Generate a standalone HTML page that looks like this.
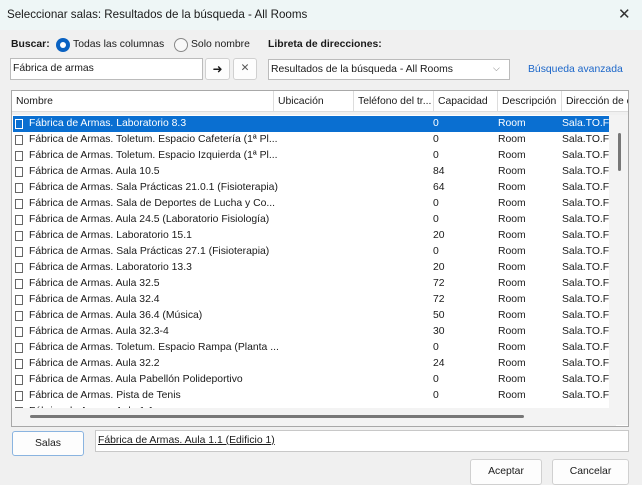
<!DOCTYPE html>
<html><head><meta charset="utf-8"><style>
*{margin:0;padding:0;box-sizing:border-box}
body{width:642px;height:480px;background:#f0f0f0;font-family:"Liberation Sans",sans-serif;font-size:10.4px;color:#1a1a1a;position:relative;overflow:hidden}
.a{position:absolute;white-space:nowrap}
.title{left:0;top:0;width:642px;height:30px;background:#eef6f6}
.box{background:#fff;border:1px solid #c8c8c8}
.row{position:absolute;left:13px;width:596px;height:16px;line-height:16px}
.row span{position:absolute}
.ic{position:absolute;left:2px;top:3px;width:8px;height:10px;border:1px solid #666;background:#fff}
.sel{background:#0a6fd1;color:#fff}
.sel .ic{border-color:#fff;background:#0a6fd1}
.btn{background:#fdfdfd;border:1px solid #d0d0d0;border-radius:3px;text-align:center}
.hd{position:absolute;top:0;height:21px;line-height:21px;border-right:1px solid #ddd;padding-left:4px}
</style></head><body>
<div class="a title"></div>
<div class="a" style="left:7px;top:8px;font-size:11.6px">Seleccionar salas: Resultados de la búsqueda - All Rooms</div>
<div class="a" style="left:618px;top:5px;font-size:15px;color:#333">✕</div>

<div class="a" style="left:11px;top:39px;font-weight:bold">Buscar:</div>
<div class="a" style="left:56px;top:38px;width:14px;height:14px;border-radius:50%;background:#0a62c2"></div>
<div class="a" style="left:60px;top:42px;width:6px;height:6px;border-radius:50%;background:#fff"></div>
<div class="a" style="left:73px;top:39px">Todas las columnas</div>
<div class="a" style="left:174px;top:38px;width:14px;height:14px;border-radius:50%;border:1px solid #888;background:#f8f8f8"></div>
<div class="a" style="left:191px;top:39px">Solo nombre</div>
<div class="a" style="left:268px;top:39px;font-weight:bold">Libreta de direcciones:</div>

<div class="a box" style="left:10px;top:58px;width:193px;height:22px;border-color:#bbb"></div>
<div class="a" style="left:13px;top:63px">Fábrica de armas</div>
<div class="a btn" style="left:205px;top:58px;width:25px;height:22px;line-height:20px;font-size:12px">➜</div>
<div class="a btn" style="left:233px;top:58px;width:24px;height:22px;line-height:20px;color:#555">✕</div>
<div class="a box" style="left:268px;top:59px;width:242px;height:21px;border-color:#bbb"></div>
<div class="a" style="left:271px;top:64px">Resultados de la búsqueda - All Rooms</div>
<div class="a" style="left:493px;top:63px;color:#777;font-size:9px">⌵</div>
<div class="a" style="left:528px;top:64px;color:#1b66c9">Búsqueda avanzada</div>

<div class="a box" style="left:11px;top:90px;width:618px;height:337px;border-color:#a8a8a8"></div>
<div class="a" style="left:12px;top:91px;width:616px;height:21px;background:#fff;border-bottom:1px solid #ddd;overflow:hidden">
<div class="hd" style="left:0;width:262px">Nombre</div>
<div class="hd" style="left:262px;width:80px">Ubicación</div>
<div class="hd" style="left:342px;width:80px">Teléfono del tr...</div>
<div class="hd" style="left:422px;width:64px">Capacidad</div>
<div class="hd" style="left:486px;width:64px">Descripción</div>
<div class="hd" style="left:550px;width:80px;border:0">Dirección de c</div>
</div>
<div class="a" style="left:12px;top:112px;width:616px;height:3px;background:#f0f0f0"></div>
<div class="a" style="left:12px;top:408px;width:604px;height:18px;background:#f3f3f3"></div>
<div class="a" style="left:30px;top:415px;width:494px;height:3px;border-radius:2px;background:#777"></div>
<div class="a" style="left:609px;top:115px;width:19px;height:310px;background:#f3f3f3"></div>
<div class="a" style="left:618px;top:133px;width:3px;height:38px;border-radius:2px;background:#777"></div>

<div class="a" style="left:0;top:116px;width:609px;height:292px;overflow:hidden">
<div class="row sel" style="top:0"><i class="ic"></i><span style="left:16px">Fábrica de Armas. Laboratorio 8.3</span><span style="left:420px">0</span><span style="left:485px">Room</span><span style="left:549px">Sala.TO.Fa</span></div>
<div class="row" style="top:16px"><i class="ic"></i><span style="left:16px">Fábrica de Armas. Toletum. Espacio Cafetería (1ª Pl...</span><span style="left:420px">0</span><span style="left:485px">Room</span><span style="left:549px">Sala.TO.Fa</span></div>
<div class="row" style="top:32px"><i class="ic"></i><span style="left:16px">Fábrica de Armas. Toletum. Espacio Izquierda (1ª Pl...</span><span style="left:420px">0</span><span style="left:485px">Room</span><span style="left:549px">Sala.TO.Fa</span></div>
<div class="row" style="top:48px"><i class="ic"></i><span style="left:16px">Fábrica de Armas. Aula 10.5</span><span style="left:420px">84</span><span style="left:485px">Room</span><span style="left:549px">Sala.TO.Fa</span></div>
<div class="row" style="top:64px"><i class="ic"></i><span style="left:16px">Fábrica de Armas. Sala Prácticas 21.0.1 (Fisioterapia)</span><span style="left:420px">64</span><span style="left:485px">Room</span><span style="left:549px">Sala.TO.Fa</span></div>
<div class="row" style="top:80px"><i class="ic"></i><span style="left:16px">Fábrica de Armas. Sala de Deportes de Lucha y Co...</span><span style="left:420px">0</span><span style="left:485px">Room</span><span style="left:549px">Sala.TO.Fa</span></div>
<div class="row" style="top:96px"><i class="ic"></i><span style="left:16px">Fábrica de Armas. Aula 24.5 (Laboratorio Fisiología)</span><span style="left:420px">0</span><span style="left:485px">Room</span><span style="left:549px">Sala.TO.Fa</span></div>
<div class="row" style="top:112px"><i class="ic"></i><span style="left:16px">Fábrica de Armas. Laboratorio 15.1</span><span style="left:420px">20</span><span style="left:485px">Room</span><span style="left:549px">Sala.TO.Fa</span></div>
<div class="row" style="top:128px"><i class="ic"></i><span style="left:16px">Fábrica de Armas. Sala Prácticas 27.1 (Fisioterapia)</span><span style="left:420px">0</span><span style="left:485px">Room</span><span style="left:549px">Sala.TO.Fa</span></div>
<div class="row" style="top:144px"><i class="ic"></i><span style="left:16px">Fábrica de Armas. Laboratorio 13.3</span><span style="left:420px">20</span><span style="left:485px">Room</span><span style="left:549px">Sala.TO.Fa</span></div>
<div class="row" style="top:160px"><i class="ic"></i><span style="left:16px">Fábrica de Armas. Aula 32.5</span><span style="left:420px">72</span><span style="left:485px">Room</span><span style="left:549px">Sala.TO.Fa</span></div>
<div class="row" style="top:176px"><i class="ic"></i><span style="left:16px">Fábrica de Armas. Aula 32.4</span><span style="left:420px">72</span><span style="left:485px">Room</span><span style="left:549px">Sala.TO.Fa</span></div>
<div class="row" style="top:192px"><i class="ic"></i><span style="left:16px">Fábrica de Armas. Aula 36.4 (Música)</span><span style="left:420px">50</span><span style="left:485px">Room</span><span style="left:549px">Sala.TO.Fa</span></div>
<div class="row" style="top:208px"><i class="ic"></i><span style="left:16px">Fábrica de Armas. Aula 32.3-4</span><span style="left:420px">30</span><span style="left:485px">Room</span><span style="left:549px">Sala.TO.Fa</span></div>
<div class="row" style="top:224px"><i class="ic"></i><span style="left:16px">Fábrica de Armas. Toletum. Espacio Rampa (Planta ...</span><span style="left:420px">0</span><span style="left:485px">Room</span><span style="left:549px">Sala.TO.Fa</span></div>
<div class="row" style="top:240px"><i class="ic"></i><span style="left:16px">Fábrica de Armas. Aula 32.2</span><span style="left:420px">24</span><span style="left:485px">Room</span><span style="left:549px">Sala.TO.Fa</span></div>
<div class="row" style="top:256px"><i class="ic"></i><span style="left:16px">Fábrica de Armas. Aula Pabellón Polideportivo</span><span style="left:420px">0</span><span style="left:485px">Room</span><span style="left:549px">Sala.TO.Fa</span></div>
<div class="row" style="top:272px"><i class="ic"></i><span style="left:16px">Fábrica de Armas. Pista de Tenis</span><span style="left:420px">0</span><span style="left:485px">Room</span><span style="left:549px">Sala.TO.Fa</span></div>
<div class="row" style="top:288px"><i class="ic"></i><span style="left:16px">Fábrica de Armas. Aula 1.1</span></div>
</div>

<div class="a btn" style="left:12px;top:431px;width:72px;height:25px;line-height:23px;border-color:#8ab4e0">Salas</div>
<div class="a box" style="left:95px;top:430px;width:534px;height:22px;border-color:#c8c8c8"></div>
<div class="a" style="left:98px;top:435px;text-decoration:underline">Fábrica de Armas. Aula 1.1 (Edificio 1)</div>
<div class="a btn" style="left:470px;top:459px;width:72px;height:26px;line-height:24px">Aceptar</div>
<div class="a btn" style="left:552px;top:459px;width:77px;height:26px;line-height:24px">Cancelar</div>
</body></html>
